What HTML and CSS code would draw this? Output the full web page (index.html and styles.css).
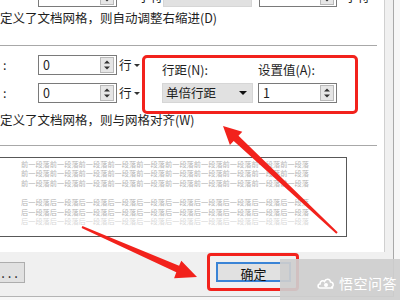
FILE: index.html
```html
<!DOCTYPE html>
<html lang="zh-CN">
<head>
  <meta charset="UTF-8">
  <meta name="viewport" content="width=device-width, initial-scale=1.0">
  <title>段落 - 缩进和间距</title>
  <link rel="stylesheet" href="styles.css">
</head>
<body>
  <div class="screen">
    <div class="dialog">
      <div class="panel">

        <!-- 缩进：上半部分被截掉 -->
        <div class="indent-row">
          <span class="spin-input">
            <span class="val"></span>
            <svg class="spin" viewBox="0 0 14 16"><rect x="0.5" y="0.5" width="13" height="15" fill="#e6e6e6" stroke="#b9b9b9"/><path d="M4 6.5 L7 3.5 L10 6.5 Z M4 9.5 L7 12.5 L10 9.5 Z" fill="#333"/></svg>
          </span>
          <span class="unit unit-wide">字符</span>
          <span class="combo combo-top"></span>
          <span class="spin-input spin-right">
            <span class="val"></span>
            <svg class="spin" viewBox="0 0 14 16"><rect x="0.5" y="0.5" width="13" height="15" fill="#e6e6e6" stroke="#b9b9b9"/><path d="M4 6.5 L7 3.5 L10 6.5 Z M4 9.5 L7 12.5 L10 9.5 Z" fill="#333"/></svg>
          </span>
          <span class="unit unit-last">字符</span>
        </div>
        <p class="check-line">定义了文档网格，则自动调整右缩进(D)</p>

        <hr class="rule">

        <!-- 间距 -->
        <div class="spacing">
          <span class="row-label">:</span>
          <span class="spin-input">
            <span class="val">0</span>
            <svg class="spin" viewBox="0 0 14 16"><rect x="0.5" y="0.5" width="13" height="15" fill="#e6e6e6" stroke="#b9b9b9"/><path d="M4 6.5 L7 3.5 L10 6.5 Z M4 9.5 L7 12.5 L10 9.5 Z" fill="#333"/></svg>
          </span>
          <span class="unit">行<i class="caret"></i></span>
          <span class="field-label">行距(N):</span>
          <span class="field-label">设置值(A):</span>

          <span class="row-label">:</span>
          <span class="spin-input">
            <span class="val">0</span>
            <svg class="spin" viewBox="0 0 14 16"><rect x="0.5" y="0.5" width="13" height="15" fill="#e6e6e6" stroke="#b9b9b9"/><path d="M4 6.5 L7 3.5 L10 6.5 Z M4 9.5 L7 12.5 L10 9.5 Z" fill="#333"/></svg>
          </span>
          <span class="unit">行<i class="caret"></i></span>
          <span class="combo">单倍行距<i class="combo-arrow"></i></span>
          <span class="spin-input">
            <span class="val">1</span>
            <svg class="spin" viewBox="0 0 14 16"><rect x="0.5" y="0.5" width="13" height="15" fill="#e6e6e6" stroke="#b9b9b9"/><path d="M4 6.5 L7 3.5 L10 6.5 Z M4 9.5 L7 12.5 L10 9.5 Z" fill="#333"/></svg>
          </span>
        </div>
        <p class="check-line check-grid">定义了文档网格，则与网格对齐(W)</p>

        <hr class="rule rule-low">

        <!-- 预览 -->
        <div class="preview">
          <div class="preview-text">
            <div>前一段落前一段落前一段落前一段落前一段落前一段落前一段落前一段落前一段落前一段落</div>
            <div>前一段落前一段落前一段落前一段落前一段落前一段落前一段落前一段落前一段落前一段落</div>
            <div>前一段落前一段落前一段落前一段落前一段落前一段落前一段落前一段落前一段落前一段落</div>
            <div>&nbsp;</div>
            <div>后一段落后一段落后一段落后一段落后一段落后一段落后一段落后一段落后一段落后一段落</div>
            <div>后一段落后一段落后一段落后一段落后一段落后一段落后一段落后一段落后一段落后一段落</div>
            <div class="faded">后一段落后一段落后一段落后一段落后一段落后一段落后一段落后一段落后一段落后一段落</div>
          </div>
        </div>
      </div>

      <div class="footer">
        <button class="btn btn-tabs">....</button>
        <button class="btn btn-ok">确定</button>
      </div>
    </div>
    <div class="edge"></div>

    <!-- 标注 -->
    <div class="callout callout-spacing"></div>
    <div class="callout callout-ok"></div>
    <svg class="arrows" viewBox="0 0 400 300">
      <polygon points="223,126 242.3,131.7 238.5,135.7 337.7,232.3 336.3,233.7 233.7,140.9 229.9,144.9" fill="#f2221c"/>
      <polygon points="197,277 181.3,260.8 179.1,265.8 82.4,226.1 81.6,227.9 176.3,272.2 174.1,278.2" fill="#f2221c"/>
    </svg>

    <div class="watermark">
      <svg class="wm-logo" viewBox="0 0 18 16">
        <path d="M3 13 C0.5 13 0.5 9 3 9 C3 6 6 5 7.5 6.5 C8.5 3.5 13 3.5 13.5 7 C16.5 7 17 11 15 12 C16 13 15.5 13 15 13 Z" fill="none" stroke="#fff" stroke-width="1.6"/>
        <circle cx="9" cy="10" r="2" fill="#fff"/>
      </svg>
      <span class="wm-text">悟空问答</span>
    </div>
  </div>
</body>
</html>
```

FILE: styles.css
```css
* {
  box-sizing: border-box;
}

body {
  margin: 0;
  width: 400px;
  height: 300px;
  overflow: hidden;
  background-color: #f7f7f7;
  color: #1e1e1e;
  font-family: "Noto Sans CJK SC", "Noto Sans", sans-serif;
  font-size: 12.5px;
  line-height: 14px;
}

.screen {
  position: relative;
  display: flex;
  width: 400px;
  height: 300px;
}

.dialog {
  width: 394px;
  height: 297px;
  background-color: #f0f0f0;
  border-right: 1px solid #a9a9a9;
  border-bottom: 1px solid #b4b4b4;
  display: flex;
  flex-direction: column;
}

.edge {
  flex: 1;
  background-color: #f7f7f7;
}

.panel {
  width: 385px;
  height: 252px;
  flex-shrink: 0;
  background-color: #fff;
  border-right: 1px solid #d0d0d0;
  overflow: hidden;
}

/* 输入框 */
.spin-input {
  display: flex;
  align-items: center;
  justify-content: space-between;
  width: 79px;
  height: 20px;
  padding: 0 2px 0 4px;
  border: 1px solid #7a7a7a;
  background-color: #fff;
}

.spin {
  width: 14px;
  height: 16px;
}

.unit {
  display: flex;
  align-items: center;
  padding-left: 2px;
  white-space: nowrap;
}

.caret {
  display: inline-block;
  margin-left: 2px;
  border-left: 3px solid transparent;
  border-right: 3px solid transparent;
  border-top: 3px solid #333;
}

.combo {
  display: flex;
  align-items: center;
  justify-content: space-between;
  width: 91px;
  height: 20px;
  padding: 0 5px 0 3px;
  background-color: #e1e1e1;
  border: 1px solid #d6d6d6;
}

.combo-arrow {
  display: inline-block;
  border-left: 4px solid transparent;
  border-right: 4px solid transparent;
  border-top: 4px solid #111;
}

/* 缩进行（被截掉） */
.indent-row {
  display: flex;
  align-items: center;
  height: 20px;
  margin-top: -13px;
  padding-left: 38px;
}

.unit-wide {
  margin-left: 19px;
  width: 27px;
  flex-shrink: 0;
}

.combo-top {
  width: 89px;
}

.spin-right {
  width: 78px;
  margin-left: 7px;
}

.unit-last {
  margin-left: 6px;
}

.check-line {
  margin: 4px 0 0;
  white-space: nowrap;
}

.check-grid {
  margin-top: 10px;
}

.rule {
  margin: 20px 7px 0 0;
  border: none;
  border-top: 1px solid #a8a8a8;
}

.rule-low {
  margin-top: 18px;
}

/* 间距 */
.spacing {
  display: grid;
  grid-template-columns: 38px 79px 45px 96px 79px;
  grid-template-rows: 20px 20px;
  row-gap: 8px;
  margin-top: 9px;
}

.row-label {
  padding-left: 3px;
  align-self: center;
}

.field-label {
  align-self: end;
  margin-bottom: -2px;
}

/* 预览 */
.preview {
  width: 348px;
  height: 80px;
  margin: 11px 0 0 -1px;
  padding: 1px 0 0 21px;
  border: 1px solid #585858;
  overflow: hidden;
}

.preview-text {
  width: 483px;
  overflow: hidden;
  color: #b4b4b4;
  font-size: 12px;
  line-height: 16px;
  white-space: nowrap;
  transform: scale(0.6);
  transform-origin: 0 0;
}

.preview-text .faded {
  color: #d8d8d8;
}

/* 底部按钮 */
.footer {
  flex: 1;
  display: flex;
  align-items: flex-start;
  padding-top: 10px;
}

.btn {
  height: 21px;
  padding: 0;
  font-family: inherit;
  font-size: 13px;
  color: #111;
  background-color: #e1e1e1;
  border: 1px solid #adadad;
}

.btn-tabs {
  width: 80px;
  margin-left: -55px;
  padding-right: 3px;
  text-align: right;
  letter-spacing: 3px;
}

.btn-ok {
  width: 75px;
  height: 20px;
  margin-left: 191px;
  border: 2px solid #3a84d6;
}

/* 标注 */
.callout {
  position: absolute;
  border: 3px solid #f2221c;
  border-radius: 5px;
}

.callout-spacing {
  left: 142px;
  top: 55px;
  width: 216px;
  height: 59px;
}

.callout-ok {
  left: 207px;
  top: 253px;
  width: 92px;
  height: 38px;
  border-radius: 4px;
}

.arrows {
  position: absolute;
  left: 0;
  top: 0;
  width: 400px;
  height: 300px;
  pointer-events: none;
}

.watermark {
  position: absolute;
  left: 280px;
  top: 259px;
  width: 120px;
  height: 41px;
  display: flex;
  align-items: center;
  gap: 4px;
  padding: 6px 0 0 37px;
  background-color: rgba(206, 206, 206, 0.92);
}

.wm-logo {
  width: 18px;
  height: 16px;
}

.wm-text {
  color: #fff;
  font-size: 14px;
  letter-spacing: 0.5px;
}
```
